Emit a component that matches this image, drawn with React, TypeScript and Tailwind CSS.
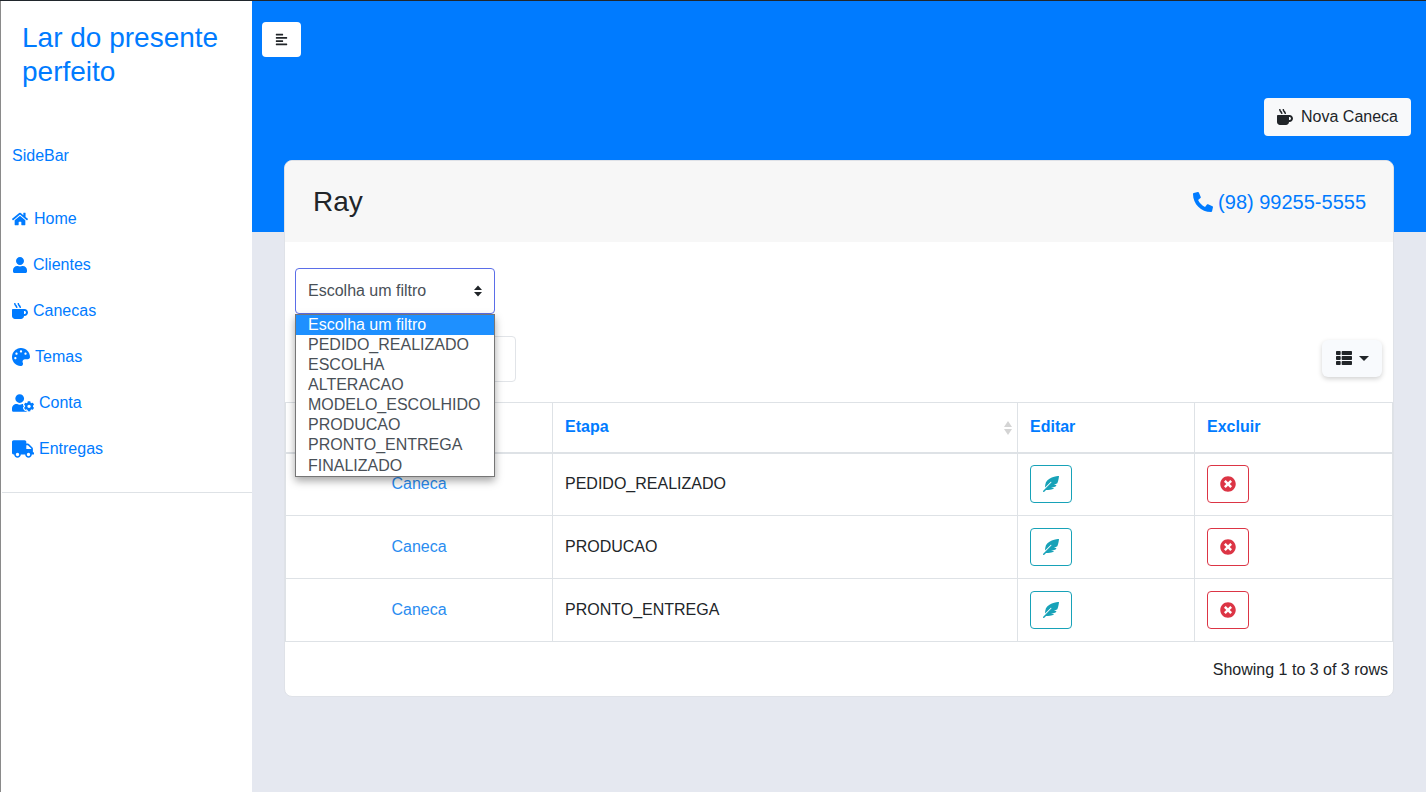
import React from "react";
import { FaHome, FaUser, FaMugHot, FaPalette, FaUserCog, FaTruck, FaPhone, FaAlignLeft, FaThList, FaFeatherAlt, FaTimesCircle } from "react-icons/fa";

const nav = [
  { icon: FaHome, label: "Home", size: "text-[16px]", gap: "gap-[6px]" },
  { icon: FaUser, label: "Clientes", size: "text-[16px]", gap: "gap-[5px]" },
  { icon: FaMugHot, label: "Canecas", size: "text-[16px]", gap: "gap-[5px]" },
  { icon: FaPalette, label: "Temas", size: "text-[18px]", gap: "gap-[5px]" },
  { icon: FaUserCog, label: "Conta", size: "text-[22px]", gap: "gap-[5px]" },
  { icon: FaTruck, label: "Entregas", size: "text-[22px]", gap: "gap-[5px]" },
];
const rows = ["PEDIDO_REALIZADO", "PRODUCAO", "PRONTO_ENTREGA"];
const options = ["PEDIDO_REALIZADO", "ESCOLHA", "ALTERACAO", "MODELO_ESCOLHIDO", "PRODUCAO", "PRONTO_ENTREGA", "FINALIZADO"];

export default function App() {
  return (
    <div className="h-[792px] w-[1426px] overflow-hidden bg-[#e5e8f0] font-['Liberation_Sans',Arial,sans-serif] text-[16px] text-[#212529]">
      <div className="h-[1px] bg-[#20262c]" />
      <div className="flex h-[791px]">
        <aside className="w-[252px] shrink-0 border-l border-[#8a8a8a] bg-white pl-[1px] text-[#007bff]">
          <div className="pl-[20px] pt-[20px] text-[28px] leading-[33.6px]">Lar do presente perfeito</div>
          <div className="mt-[56px] pl-[10px] leading-[24px]">SideBar</div>
          <nav className="mt-[28px] flex flex-col border-b border-[#dee2e6] pb-[20px]">
            {nav.map(({ icon: Icon, label, size, gap }) => (
              <div key={label} className={`flex h-[46px] items-center pl-[10px] ${gap}`}>
                <Icon className={size} />
                <span>{label}</span>
              </div>
            ))}
          </nav>
        </aside>
        <main className="flex-1">
          <div className="h-[231px] bg-[#007bff] pl-[10px] pr-[15px] pt-[21px]">
            <button className="flex h-[35px] w-[39px] items-center justify-center rounded-[4px] bg-white">
              <FaAlignLeft className="text-[13px] text-[#212529]" />
            </button>
            <div className="mt-[41px] flex justify-end">
              <button className="flex h-[38px] items-center gap-[8px] rounded-[4px] bg-[#f8f9fa] px-[13px]">
                <FaMugHot className="text-[16px]" />
                <span>Nova Caneca</span>
              </button>
            </div>
          </div>
          <div className="relative -mt-[72px] ml-[32px] mr-[32px] h-[537px] rounded-[8px] border border-[#dfe2e8] bg-white">
            <div className="flex h-[81px] items-center justify-between rounded-t-[8px] bg-[#f7f7f7] pl-[28px] pr-[27px]">
              <span className="text-[28px]">Ray</span>
              <span className="flex items-center gap-[5px] text-[20px] text-[#007bff]">
                <FaPhone className="text-[20px] -scale-x-100" />
                (98) 99255-5555
              </span>
            </div>
            <div className="relative px-[10px] pt-[26px]">
              <div className="flex h-[46px] w-[200px] items-center justify-between rounded-[4px] border border-[#5b6ee8] bg-white pl-[12px] pr-[11px] text-[#495057]">
                <span>Escolha um filtro</span>
                <svg width="10" height="14" viewBox="0 0 10 14" className="text-[#212529]"><path d="M5 1.5 9 6H1zM5 12.5 1 8h8z" fill="currentColor" /></svg>
              </div>
              <div className="absolute left-[10px] top-[72px] z-10 w-[200px] border border-[#767676] bg-white text-[#495057] shadow-[0_4px_8px_rgba(0,0,0,0.35)]">
                <div className="h-[20px] bg-[#1e90ff] pl-[12px] leading-[20px] text-white">Escolha um filtro</div>
                {options.map((o) => (
                  <div key={o} className="h-[20.1px] pl-[12px] leading-[20.1px]">{o}</div>
                ))}
              </div>
              <div className="mt-[22px] flex h-[46px] items-center justify-between pr-[1px]">
                <div className="h-[46px] w-[221px] rounded-[4px] border border-[#e1e4e8]" />
                <button className="flex h-[37px] w-[60px] -translate-y-[1px] items-center justify-center gap-[7px] rounded-[6px] bg-[#f8fafd] shadow-[0_2px_5px_rgba(0,0,0,0.18)]">
                  <FaThList className="text-[16px]" />
                  <span className="h-0 w-0 border-x-[5px] border-t-[5px] border-x-transparent border-t-[#212529]" />
                </button>
              </div>
            </div>
            <table className="ml-[0px] mt-[20px] w-[1108px] table-fixed border-collapse border border-[#dee2e6]">
              <thead>
                <tr className="h-[50px] border-b-2 border-[#dee2e6] text-left font-bold text-[#007bff]">
                  <th className="w-[267px] border-r border-[#dee2e6]" />
                  <th className="relative w-[465px] border-r border-[#dee2e6] px-[12px]">
                    Etapa
                    <svg width="10" height="16" viewBox="0 0 10 16" className="absolute right-[4px] top-[17px] text-[#d4d4d4]"><path d="M5 1 9 7H1zM5 15 1 9h8z" fill="currentColor" /></svg>
                  </th>
                  <th className="w-[177px] border-r border-[#dee2e6] px-[12px]">Editar</th>
                  <th className="px-[12px]">Excluir</th>
                </tr>
              </thead>
              <tbody>
                {rows.map((r) => (
                  <tr key={r} className="h-[63px] border-b border-[#dee2e6]">
                    <td className="border-r border-[#dee2e6] text-center text-[#2a8cf0]">Caneca</td>
                    <td className="border-r border-[#dee2e6] px-[12px]">{r}</td>
                    <td className="border-r border-[#dee2e6] px-[12px]">
                      <button className="flex h-[38px] w-[42px] items-center justify-center rounded-[4px] border border-[#17a2b8] text-[#17a2b8]">
                        <FaFeatherAlt className="text-[16px]" />
                      </button>
                    </td>
                    <td className="px-[12px]">
                      <button className="flex h-[38px] w-[42px] items-center justify-center rounded-[4px] border border-[#dc3545] text-[#dc3545]">
                        <FaTimesCircle className="text-[16px]" />
                      </button>
                    </td>
                  </tr>
                ))}
              </tbody>
            </table>
            <div className="pr-[5px] pt-[16px] text-right">Showing 1 to 3 of 3 rows</div>
          </div>
        </main>
      </div>
    </div>
  );
}
